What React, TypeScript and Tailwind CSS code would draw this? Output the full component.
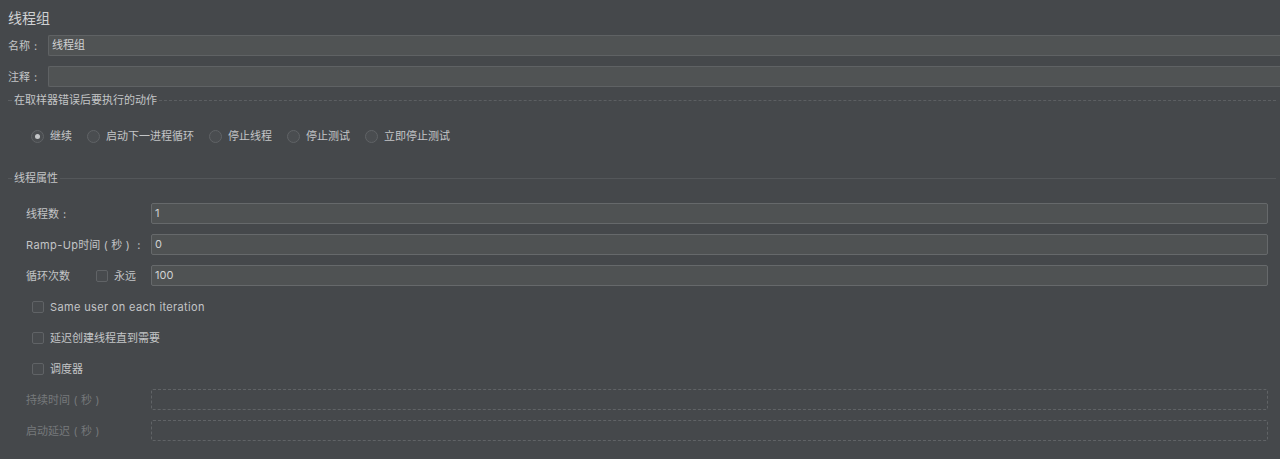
import React from 'react';

const font = { fontFamily: 'Inter, "Noto Sans CJK SC", sans-serif' };

// full-width punctuation drawn centred in a one-em box
function P({ c }: { c: string }) {
  return <span className="inline-block w-[11px] text-center">{c}</span>;
}

function SectionTitle({ title, dashed }: { title: string; dashed?: boolean }) {
  const line = dashed ? 'border-t border-dashed border-[#5c5f62]' : 'border-t border-[#54575a]';
  return (
    <div className="flex items-center h-[14px] pl-2 pr-1">
      <div className={`w-[4px] ${line}`} />
      <span className="px-[2px] text-[11px] text-[#c3c5c7] leading-none">{title}</span>
      <div className={`flex-1 ${line}`} />
    </div>
  );
}

function Radio({ label, checked }: { label: string; checked?: boolean }) {
  return (
    <label className="flex items-center gap-[6px]">
      <span className="w-[13px] h-[13px] rounded-full border border-[#606366] bg-[#4a4d50] flex items-center justify-center">
        {checked && <span className="w-[5px] h-[5px] rounded-full bg-[#c4c6c8]" />}
      </span>
      <span className="text-[11px] text-[#c3c5c7] leading-none">{label}</span>
    </label>
  );
}

function Checkbox({ label, latin }: { label: string; latin?: boolean }) {
  return (
    <div className="flex items-center h-[21px] pl-8 gap-[6px]">
      <span className="w-[12px] h-[12px] rounded-[2px] border border-[#606366] bg-[#484b4e]" />
      <span className={`text-[11px] text-[#c3c5c7] leading-none pt-px ${latin ? 'tracking-[0.35px]' : ''}`}>{label}</span>
    </div>
  );
}

function Field({ label, value, disabled, extra }: { label: React.ReactNode; value?: string; disabled?: boolean; extra?: React.ReactNode }) {
  return (
    <div className="flex items-center h-[21px] pl-[26px] pr-3">
      <div className="w-[125px] flex items-center">
        <span className={`text-[11px] leading-none whitespace-nowrap pt-px ${disabled ? 'text-[#76797b]' : 'text-[#c3c5c7]'}`}>{label}</span>
        {extra}
      </div>
      <div
        className={
          disabled
            ? 'flex-1 h-full rounded-[2px] border border-dashed border-[#606366]'
            : 'flex-1 h-full rounded-[2px] border border-[#66696b] bg-[#4f5253] flex items-center px-[3px] text-[11px] text-[#d0d2d3]'
        }
      >
        {value}
      </div>
    </div>
  );
}

export default function App() {
  return (
    <div className="w-[1280px] h-[459px] bg-[#45484b] overflow-hidden flex flex-col" style={font}>
      <div className="h-[35px] flex items-center pl-2 text-[14px] text-[#cfd1d3]">线程组</div>

      <div className="flex flex-col gap-[10px]">
        <div className="flex items-center h-[21px] pl-2">
          <span className="w-[40px] text-[11px] text-[#c3c5c7] pt-px">名称<P c=":" /></span>
          <div className="flex-1 h-full rounded-l-[2px] border border-r-0 border-[#5f6264] bg-[#505354] flex items-center px-[3px] text-[11px] text-[#d0d2d3]">
            线程组
          </div>
        </div>
        <div className="flex items-center h-[21px] pl-2">
          <span className="w-[40px] text-[11px] text-[#c3c5c7] pt-px">注释<P c=":" /></span>
          <div className="flex-1 h-full rounded-l-[2px] border border-r-0 border-[#5f6264] bg-[#505354]" />
        </div>
      </div>

      <div className="mt-[6px]">
        <SectionTitle title="在取样器错误后要执行的动作" dashed />
      </div>

      <div className="mt-[22px] h-[14px] flex items-center pl-[31px] gap-[15px]">
        <Radio label="继续" checked />
        <Radio label="启动下一进程循环" />
        <Radio label="停止线程" />
        <Radio label="停止测试" />
        <Radio label="立即停止测试" />
      </div>

      <div className="mt-[28px]">
        <SectionTitle title="线程属性" />
      </div>

      <div className="mt-[18px] flex flex-col gap-[10px]">
        <Field label={<>线程数<P c=":" /></>} value="1" />
        <Field
          label={
            <>
              <span className="tracking-[0.4px]">Ramp-Up</span>时间<P c="(" />秒<P c=")" /><P c=":" />
            </>
          }
          value="0"
        />
        <Field
          label="循环次数"
          value="100"
          extra={
            <span className="ml-[26px] flex items-center gap-[6px]">
              <span className="w-[12px] h-[12px] rounded-[2px] border border-[#606366] bg-[#484b4e]" />
              <span className="text-[11px] text-[#c3c5c7] leading-none pt-px">永远</span>
            </span>
          }
        />
        <Checkbox label="Same user on each iteration" latin />
        <Checkbox label="延迟创建线程直到需要" />
        <Checkbox label="调度器" />
        <Field label={<>持续时间<P c="(" />秒<P c=")" /></>} disabled />
        <Field label={<>启动延迟<P c="(" />秒<P c=")" /></>} disabled />
      </div>
    </div>
  );
}
